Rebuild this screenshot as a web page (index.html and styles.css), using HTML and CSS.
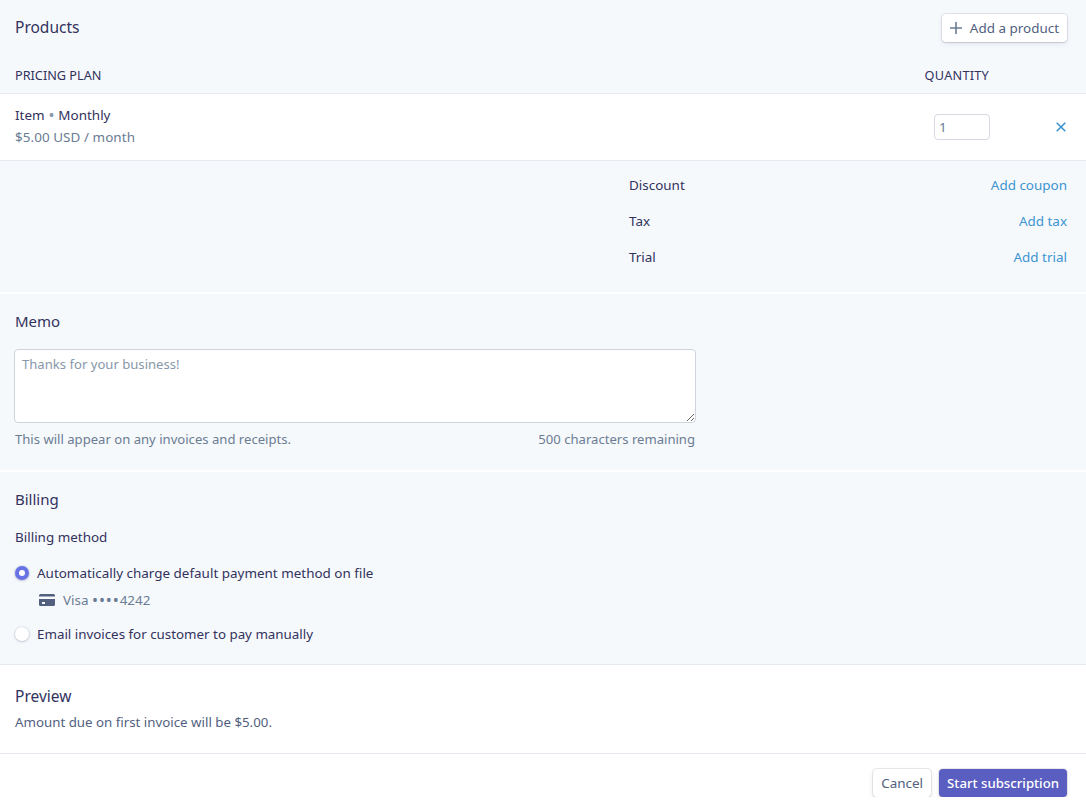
FILE: index.html
```html
<!DOCTYPE html>
<html lang="en">
<head>
<meta charset="utf-8">
<title>Subscription</title>
<link rel="stylesheet" href="styles.css">
</head>
<body>
<section class="products">
  <div class="head-row">
    <h2 class="title">Products</h2>
    <button class="btn add-btn"><svg class="plus" width="12" height="12" viewBox="0 0 12 12"><path d="M6 0v12M0 6h12" stroke="#6b7c93" stroke-width="1.6" fill="none"/></svg>Add a product</button>
  </div>
  <div class="col-row"><span>PRICING PLAN</span><span class="col-qty">QUANTITY</span></div>
  <div class="item-row">
    <div class="item-info">
      <div class="item-name">Item <span class="dot">•</span> Monthly</div>
      <div class="item-price">$5.00 USD / month</div>
    </div>
    <input class="qty" type="text" value="1">
    <svg class="remove" width="10" height="10" viewBox="0 0 10 10"><path d="M.7.7l8.6 8.6M9.3.7L.7 9.3" stroke="#3d94d1" stroke-width="1.6" fill="none"/></svg>
  </div>
  <div class="totals">
    <div class="total-row"><span>Discount</span><a class="link">Add coupon</a></div>
    <div class="total-row"><span>Tax</span><a class="link">Add tax</a></div>
    <div class="total-row"><span>Trial</span><a class="link">Add trial</a></div>
  </div>
</section>
<section class="memo">
  <h2 class="title short">Memo</h2>
  <div class="memo-box">
    <textarea class="memo-input" placeholder="Thanks for your business!"></textarea>
    <div class="memo-help"><span>This will appear on any invoices and receipts.</span><span>500 characters remaining</span></div>
  </div>
</section>
<section class="billing">
  <h2 class="title short">Billing</h2>
  <div class="method-label">Billing method</div>
  <div class="radio-row first"><span class="radio on"></span>Automatically charge default payment method on file</div>
  <div class="card-row"><svg class="card" width="16" height="12" viewBox="0 0 16 12"><path d="M1.5 0h13A1.5 1.5 0 0 1 16 1.500V2.500H0V1.500A1.500 1.500 0 0 1 1.500 0zM0 5h16v5.500a1.500 1.500 0 0 1-1.500 1.500h-13A1.500 1.500 0 0 1 0 10.500zM3 8v2h3V8z" fill="#525f7f"/></svg><span>Visa <span class="mask">••••</span>4242</span></div>
  <div class="radio-row email"><span class="radio"></span>Email invoices for customer to pay manually</div>
</section>
<section class="preview">
  <h2 class="title">Preview</h2>
  <p class="preview-text">Amount due on first invoice will be $5.00.</p>
</section>
<footer class="actions">
  <button class="btn">Cancel</button>
  <button class="btn primary">Start subscription</button>
</footer>
</body>
</html>
```
FILE: styles.css
```css
* { box-sizing: border-box; }
html, body { margin: 0; padding: 0; }
body {
  background: #fff;
  font-family: "Noto Sans", sans-serif;
  font-size: 13.45px;
  line-height: 20px;
  color: #32325d;
  overflow: hidden;
}
.title { margin: 0; font-size: 15.5px; font-weight: 400; line-height: 22px; color: #32325d; }
.title.short { font-size: 15px; line-height: 20px; }
.products { background: #f6f9fc; height: 292px; }
.head-row { display: flex; justify-content: space-between; align-items: center; padding: 13px 19px 0 15px; height: 43px; }
.head-row .title { margin-top: -2px; }
.btn {
  font: inherit; border: 0; border-radius: 4px; background: #fff; color: #525f7f;
  height: 28px; padding: 0 8px; margin: 0;
  box-shadow: 0 0 0 1px rgba(50,50,93,.1), 0 2px 5px rgba(50,50,93,.1), 0 1px 1px rgba(0,0,0,.07);
}
.add-btn { display: flex; align-items: center; gap: 8px; }
.col-row { display: flex; justify-content: space-between; padding: 14px 97px 0 15px; height: 51px; align-items: center; font-size: 12.7px; border-bottom: 1px solid #e6ebf1; }
.col-qty { letter-spacing: .25px; }
.item-row { display: flex; align-items: center; background: #fff; height: 67px; padding: 0 20px 0 15px; border-bottom: 1px solid #e6ebf1; }
.item-info { flex: 1; margin-top: -2px; }
.item-name { line-height: 22px; }
.dot { color: #8898aa; margin: 0 .4px; font-size: 16px; line-height: 1; vertical-align: -1px; }
.item-price { color: #6b7c93; line-height: 22px; letter-spacing: .06px; }
.qty { width: 56px; height: 26px; border: 1px solid #d5d9e2; border-radius: 4px; padding: 0 4px; font: inherit; color: #6b7c93; margin-right: 66px; background: #fff; outline: 0; }
.totals { padding: 6px 19px 0 629px; }
.total-row { display: flex; justify-content: space-between; height: 36px; align-items: center; }
.link { color: #3d94d1; }
.memo { background: #f6f9fc; margin-top: 2px; height: 176px; padding: 17px 15px 0; }
.memo-box { width: 681px; margin: 18px 0 0 -1px; }
.memo-input { display: block; width: 682px; height: 74px; border: 1px solid #cfd3dc; border-radius: 4px; padding: 4px 7px; font: inherit; font-size: 13.1px; color: #32325d; background: #fff; outline: 0; margin: 0; }
.memo-input::placeholder { color: #8898aa; opacity: 1; }
.memo-help { display: flex; justify-content: space-between; padding-left: 1px; margin-top: 6px; color: #6b7c93; font-size: 13.1px; }
.billing { background: #f6f9fc; margin-top: 2px; height: 193px; padding: 17px 15px 0; border-bottom: 1px solid #e6ebf1; }
.method-label { margin-top: 18px; }
.radio-row { display: flex; align-items: center; gap: 8px; height: 20px; }
.radio-row.first { margin-top: 16px; }
.radio-row.email { font-size: 13.35px; }
.radio { width: 14px; height: 14px; border-radius: 50%; background: #fff; box-shadow: 0 0 0 1px rgba(50,50,93,.08), 0 1px 3px rgba(50,50,93,.2); }
.radio.on { background: #6772e5; position: relative; }
.radio.on::after { content: ""; position: absolute; left: 4px; top: 4px; width: 6px; height: 6px; border-radius: 50%; background: #fff; }
.card-row { display: flex; align-items: center; gap: 8px; height: 20px; margin: 7px 0 14px 24px; color: #6b7c93; }
.mask { font-size: 16px; line-height: 1; letter-spacing: .9px; vertical-align: -1px; }
.preview { height: 89px; padding: 20px 15px 0; border-bottom: 1px solid #e6ebf1; }
.preview-text { margin: 5px 0 0; color: #525f7f; font-size: 13.3px; }
.actions { display: flex; justify-content: flex-end; gap: 8px; padding: 15px 19px 0 0; }
.primary { background: #5a5ec1; color: #fff; font-weight: 500; font-size: 13.2px; }
```
